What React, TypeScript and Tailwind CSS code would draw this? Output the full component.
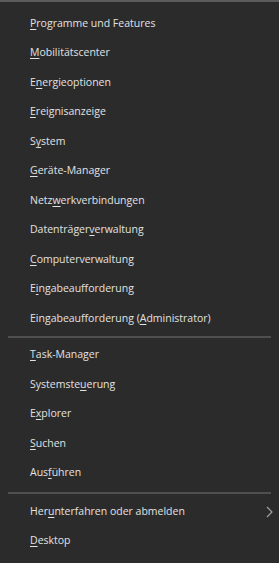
import { ReactNode } from "react"

type Item = { pre: string; key: string; post: string; arrow?: boolean }

const groupA: Item[] = [
  { pre: "", key: "P", post: "rogramme und Features" },
  { pre: "", key: "M", post: "obilitätscenter" },
  { pre: "E", key: "n", post: "ergieoptionen" },
  { pre: "", key: "E", post: "reignisanzeige" },
  { pre: "S", key: "y", post: "stem" },
  { pre: "", key: "G", post: "eräte-Manager" },
  { pre: "Netz", key: "w", post: "erkverbindungen" },
  { pre: "Datenträger", key: "v", post: "erwaltung" },
  { pre: "", key: "C", post: "omputerverwaltung" },
  { pre: "E", key: "i", post: "ngabeaufforderung" },
  { pre: "Eingabeaufforderung (", key: "A", post: "dministrator)" },
]

const groupB: Item[] = [
  { pre: "", key: "T", post: "ask-Manager" },
  { pre: "Systemste", key: "u", post: "erung" },
  { pre: "E", key: "x", post: "plorer" },
  { pre: "", key: "S", post: "uchen" },
  { pre: "Aus", key: "f", post: "ühren" },
]

const groupC: Item[] = [
  { pre: "Her", key: "u", post: "nterfahren oder abmelden", arrow: true },
  { pre: "", key: "D", post: "esktop" },
]

function Row({ item }: { item: Item }): ReactNode {
  return (
    <div className="h-[29.5px] flex items-center pl-[30px] pr-[6px] text-[10.5px] text-[#e2e2e2]">
      <span className="flex-1 whitespace-nowrap">
        {item.pre}
        <span className="underline underline-offset-2 decoration-1">{item.key}</span>
        {item.post}
      </span>
      {item.arrow && (
        <svg width="7" height="12" viewBox="0 0 7 12">
          <path d="M1 1 L6 6 L1 11" fill="none" stroke="#a0a0a0" strokeWidth="1.2" />
        </svg>
      )}
    </div>
  )
}

function Separator() {
  return <div className="mx-[8px] h-[2px] bg-[#4f4f4f]" />
}

export default function App() {
  return (
    <div
      className="w-[279px] h-[563px] bg-[#2b2b2b] border-t-2 border-[#5c5c5c] flex flex-col pt-[7px] overflow-hidden"
      style={{ fontFamily: '"Open Sans", "Noto Sans", sans-serif' }}
    >
      {groupA.map((it, i) => (
        <Row key={i} item={it} />
      ))}
      <div className="py-[2.5px]">
        <Separator />
      </div>
      {groupB.map((it, i) => (
        <Row key={i} item={it} />
      ))}
      <div className="py-[3.5px]">
        <Separator />
      </div>
      {groupC.map((it, i) => (
        <Row key={i} item={it} />
      ))}
    </div>
  )
}
